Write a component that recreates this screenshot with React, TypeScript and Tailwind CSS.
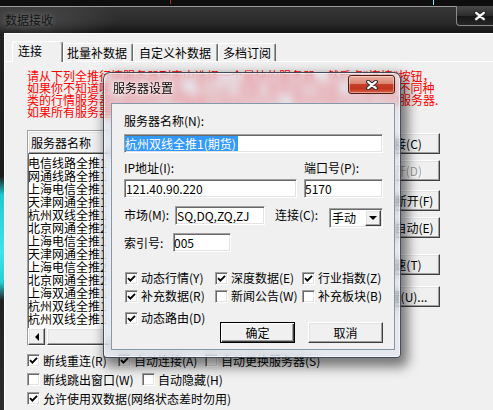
import React from "react";

// classic 3D edges
const sunken =
  "border border-t-[#a0a0a0] border-l-[#a0a0a0] border-r-white border-b-white shadow-[inset_1px_1px_0_#696969,inset_-1px_-1px_0_#e3e3e3]";
const raised =
  "border border-t-white border-l-white border-r-[#404040] border-b-[#404040] shadow-[inset_-1px_-1px_0_#a0a0a0,inset_1px_1px_0_#e3e3e3]";

const servers = [
  "电信线路全推1",
  "网通线路全推1",
  "上海电信全推1",
  "天津网通全推1",
  "杭州双线全推1",
  "北京网通全推2",
  "上海电信全推1",
  "天津网通全推1",
  "上海电信全推2",
  "北京网通全推2",
  "上海双通全推1",
  "杭州双线全推1",
  "杭州双线全推1",
];

function Tick() {
  return (
    <svg width="9" height="9" viewBox="0 0 9 9" className="block">
      <path d="M1 4.2 3.4 6.6 8 1.8" fill="none" stroke="#000" strokeWidth="1.9" />
    </svg>
  );
}

function Check({ on = false }: { on?: boolean }) {
  return (
    <span className={`flex h-[13px] w-[13px] shrink-0 items-center justify-center bg-white ${sunken}`}>
      {on && <Tick />}
    </span>
  );
}

function Opt({ label, on, className = "" }: { label: string; on?: boolean; className?: string }) {
  return (
    <div className={`flex items-center gap-[3px] whitespace-nowrap ${className}`}>
      <Check on={on} />
      <span>{label}</span>
    </div>
  );
}

function Btn({
  children,
  className = "",
  disabled,
}: {
  children: React.ReactNode;
  className?: string;
  disabled?: boolean;
}) {
  return (
    <div
      className={`flex h-[21px] items-center justify-center whitespace-nowrap bg-[#f0f0f0] ${raised} ${
        disabled ? "text-[#a0a0a0] [text-shadow:1px_1px_0_#fff]" : ""
      } ${className}`}
    >
      {children}
    </div>
  );
}

function CloseX() {
  return (
    <svg width="12" height="10" viewBox="0 0 12 10" className="block">
      <path d="M2.2 1.8 9.8 8.2M9.8 1.8 2.2 8.2" stroke="#2b2b2b" strokeWidth="4.2" strokeLinecap="round" />
      <path d="M2.2 1.8 9.8 8.2M9.8 1.8 2.2 8.2" stroke="#fff" strokeWidth="2.2" strokeLinecap="round" />
    </svg>
  );
}

function ServerDialog() {
  return (
    <div className="absolute left-[103px] top-[72px] flex h-[286px] w-[298px] flex-col rounded-t-[7px] rounded-b-[4px] border border-[rgba(30,40,55,0.8)] bg-[rgba(214,222,234,0.45)] shadow-[4px_6px_12px_3px_rgba(0,0,0,0.5),inset_0_0_0_1px_rgba(255,255,255,0.55)] backdrop-blur-[4px]">
      {/* caption */}
      <div className="flex h-[30px] shrink-0 justify-between">
        <div className="pl-[9px] pt-[8px] text-[12px] leading-[14px] text-black [text-shadow:0_0_6px_#fff,0_0_3px_#fff]">
          服务器设置
        </div>
        <div className="mr-[5px] mt-[2px] flex h-[19px] w-[47px] items-center justify-center rounded-[3px] border border-[#4d1b12] bg-[linear-gradient(180deg,#eab0a2_0%,#dc8672_45%,#c7402a_50%,#c2351f_75%,#da6348_100%)] shadow-[inset_0_0_0_1px_rgba(255,255,255,0.4)]">
          <CloseX />
        </div>
      </div>

      {/* client */}
      <div className="mb-[7px] ml-[7px] mr-[5px] flex flex-1 flex-col border border-[#8797aa] bg-[#f0f0f0] pl-[12px]">
        <div className="pt-[10px]">服务器名称(N):</div>
        <div className={`mt-[6px] flex h-[19px] w-[259px] items-center bg-white ${sunken}`}>
          <span className="bg-[#3399ff] pr-[2px] leading-[15px] text-white">杭州双线全推1(期货)</span>
        </div>

        <div className="mt-[8px] flex">
          <div className="w-[180px]">IP地址(I):</div>
          <div>端口号(P):</div>
        </div>
        <div className="mt-[4px] flex gap-[7px]">
          <div className={`flex h-[19px] w-[173px] items-center bg-white pl-[1px] ${sunken}`}>121.40.90.220</div>
          <div className={`flex h-[19px] w-[79px] items-center bg-white ${sunken}`}>5170</div>
        </div>

        <div className="mt-[8px] flex h-[22px] items-start">
          <div className="w-[51px] pt-[2px]">市场(M):</div>
          <div className={`flex h-[19px] w-[90px] items-center bg-white pl-[1px] ${sunken}`}>SQ,DQ,ZQ,ZJ</div>
          <div className="ml-[10px] w-[54px] pt-[2px]">连接(C):</div>
          <div className={`mt-[2px] flex h-[20px] w-[54px] items-center justify-between bg-white pl-[2px] pr-[1px] ${sunken}`}>
            <span>手动</span>
            <span className={`flex h-[16px] w-[16px] items-center justify-center bg-[#f0f0f0] ${raised}`}>
              <span className="h-0 w-0 border-x-[4px] border-t-[4px] border-x-transparent border-t-black" />
            </span>
          </div>
        </div>

        <div className="mt-[5px] flex items-start">
          <div className="w-[49px] pt-[3px]">索引号:</div>
          <div className={`flex h-[19px] w-[58px] items-center bg-white ${sunken}`}>005</div>
        </div>

        <div className="ml-[1px] mt-[19px] flex">
          <Opt label="动态行情(Y)" on className="w-[90px]" />
          <Opt label="深度数据(E)" on className="w-[87px]" />
          <Opt label="行业指数(Z)" on />
        </div>
        <div className="ml-[1px] mt-[4px] flex">
          <Opt label="补充数据(R)" on className="w-[90px]" />
          <Opt label="新闻公告(W)" className="w-[87px]" />
          <Opt label="补充板块(B)" />
        </div>
        <div className="ml-[1px] mt-[8px] flex items-start">
          <Opt label="动态路由(D)" on className="w-[95px]" />
          <div className="mt-[11px] flex gap-[13px]">
            <div className="flex h-[21px] w-[75px] items-center justify-center border border-black bg-[#f0f0f0] shadow-[inset_1px_1px_0_#fff,inset_-1px_-1px_0_#404040,inset_-2px_-2px_0_#a0a0a0]">
              确定
            </div>
            <Btn className="w-[75px]">取消</Btn>
          </div>
        </div>
      </div>
    </div>
  );
}

export default function App() {
  return (
    <div className="relative h-[410px] w-[493px] overflow-hidden bg-[#0e0e0e] font-['Noto_Sans_CJK_SC',sans-serif] text-[12px] leading-[14px] text-black">
      {/* desktop above the window */}
      <div className="flex h-[6px]">
        <div className="w-[170px]" />
        <div className="h-[4px] w-px bg-[#c02020]" />
        <div className="w-[262px]" />
        <div className="h-[5px] w-px bg-[#7fe8f0]" />
      </div>

      <div className="flex h-[404px] flex-col border-t border-[#9c9c9c]">
        {/* title bar */}
        <div className="flex h-[26px] shrink-0 justify-between bg-[radial-gradient(ellipse_90px_22px_at_30px_12px,#4a4a4a,transparent),linear-gradient(180deg,#363636_0%,#2a2a2a_60%,#141414_100%)]">
          <div className="pl-[5px] pt-[6px] text-[#141414] [text-shadow:0_0_6px_rgba(255,255,255,0.35)]">数据接收</div>
          <div className="-mr-[11px] -mt-px flex h-[20px] w-[48px] items-center justify-center rounded-bl-[4px] border border-t-0 border-[#8a8a8a] bg-[linear-gradient(180deg,#4a4a4a_0%,#2c2c2c_50%,#161616_52%,#262626_100%)]">
            <CloseX />
          </div>
        </div>

        <div className="flex flex-1">
          <div className="w-[4px] bg-[linear-gradient(180deg,#222_0%,#1c1c1c_38%,#23c9d2_43%,#3fe3ea_58%,#28cfd8_66%,#202020_71%,#2c2c2c_100%)]" />

          {/* client area */}
          <div className="flex flex-1 flex-col border-l border-t border-white bg-[#f0f0f0]">
            {/* tabs */}
            <div className="flex h-[27px] shrink-0 items-end pl-[7px]">
              <div className="relative z-10 -mb-px h-[21px] w-[51px] rounded-t-[3px] border-l border-r border-t border-l-white border-r-[#696969] border-t-white bg-[#f0f0f0] pl-[5px] pt-[2px] shadow-[inset_-1px_0_0_#a0a0a0]">
                连接
              </div>
              <div className="h-[18px] w-[70px] rounded-t-[2px] border-l border-r border-t border-l-white border-r-[#696969] border-t-white pl-[3px] pt-[2px] shadow-[inset_-1px_0_0_#a0a0a0]">
                批量补数据
              </div>
              <div className="h-[18px] w-[85px] rounded-t-[2px] border-l border-r border-t border-l-white border-r-[#696969] border-t-white pl-[5px] pt-[2px] shadow-[inset_-1px_0_0_#a0a0a0]">
                自定义补数据
              </div>
              <div className="h-[18px] w-[58px] rounded-t-[2px] border-l border-r border-t border-l-white border-r-[#696969] border-t-white pl-[4px] pt-[2px] shadow-[inset_-1px_0_0_#a0a0a0]">
                多档订阅
              </div>
            </div>

            {/* tab page */}
            <div className="flex flex-1 flex-col border-t border-white pl-[22px] pt-[8px]">
              <div className="whitespace-nowrap leading-[12px] text-[#ff0000]">
                <div>请从下列全推行情服务器列表中选择一个最快的服务器，然后点"连接"按钮，</div>
                <div>如果你不知道哪个服务器最快，可以点"测速"按钮进行测速，并请注意不同种</div>
                <div>类的行情服务器所提供的行情数据内容有所不同，请选择最适合自己的服务器.</div>
                <div>如果所有服务器都连接不上，请检查网络设置.</div>
              </div>

              <div className="mt-[12px] flex">
                {/* server list */}
                <div className={`flex h-[216px] w-[330px] flex-col bg-white ${sunken}`}>
                  <div className={`flex h-[23px] shrink-0 items-center bg-[#f0f0f0] pl-[2px] ${raised}`}>服务器名称</div>
                  <div className="pt-[2px]">
                    {servers.map((s, i) => (
                      <div key={i} className="h-[13px] whitespace-nowrap leading-[13px]">
                        {s}
                      </div>
                    ))}
                  </div>
                  <div className="flex-1" />
                  <div className="flex h-[17px] shrink-0 gap-[2px] bg-[#e6e6e6]">
                    <div className={`flex h-[17px] w-[17px] items-center justify-center bg-[#f0f0f0] ${raised}`}>
                      <span className="h-0 w-0 border-y-[4px] border-r-[4px] border-y-transparent border-r-black" />
                    </div>
                    <div className={`h-[17px] w-[220px] bg-[#f0f0f0] ${raised}`} />
                  </div>
                </div>

                {/* action buttons */}
                <div className="ml-[7px] flex w-[76px] flex-col">
                  <Btn className="mt-[3px]">连接(C)</Btn>
                  <Btn className="mt-[6px]" disabled>
                    断开(D)
                  </Btn>
                  <Btn className="mt-[9px]">全部断开(F)</Btn>
                  <Btn className="mt-[6px]">全部自动(E)</Btn>
                  <Btn className="mt-[16px]">测速(T)</Btn>
                  <Btn className="mt-[11px]">设置(U)...</Btn>
                </div>
              </div>

              <div className="mt-[5px] flex h-[19px] items-center">
                <Opt label="断线重连(R)" on className="w-[91px]" />
                <Opt label="自动连接(A)" on className="w-[87px]" />
                <Opt label="自动更换服务器(S)" />
              </div>
              <div className="flex h-[19px] items-center">
                <Opt label="断线跳出窗口(W)" className="w-[115px]" />
                <Opt label="自动隐藏(H)" />
              </div>
              <div className="flex h-[19px] items-center">
                <Opt label="允许使用双数据(网络状态差时勿用)" on />
              </div>
            </div>
          </div>
        </div>
      </div>

      <ServerDialog />
    </div>
  );
}
